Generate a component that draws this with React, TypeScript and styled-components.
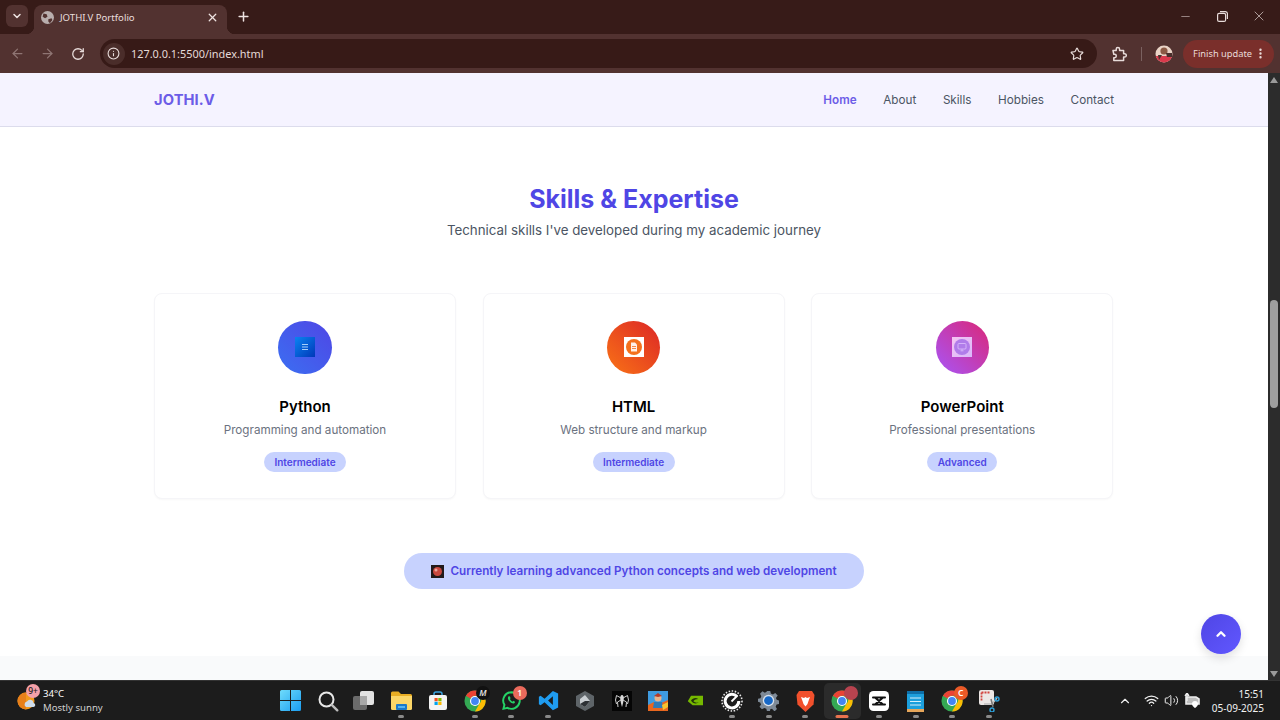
import React from 'react';
import styled, { createGlobalStyle } from 'styled-components';
import { ArrowLeft, ArrowRight, ChevronDown, ChevronUp, Info, Minus, MoreVertical, Plus, RotateCw, Star, Volume2, Wifi, X } from 'lucide-react';

const Global = createGlobalStyle`
  html, body { margin: 0; padding: 0; width: 1280px; height: 720px; overflow: hidden; background: #fff; }
  * { box-sizing: border-box; }
  body { font-family: Inter, "Liberation Sans", sans-serif; }
`;

const Screen = styled.div`
  width: 1280px; height: 720px; display: flex; flex-direction: column; overflow: hidden;
`;
const TabStrip = styled.div`
  height: 34px; flex: none; background: #371b18; display: flex; align-items: flex-end; padding-left: 6px; color: #eee3e1;
`;
const TabSearch = styled.div`
  width: 22px; height: 22px; margin: 0 6px 7px 0; background: #523230; border-radius: 6px;
  display: flex; align-items: center; justify-content: center;
`;
const Tab = styled.div`
  position: relative; width: 193px; height: 29px; background: #523230; border-radius: 8px 8px 0 0;
  display: flex; align-items: center; padding: 0 8px 4px 7px; gap: 6px;
  &::before, &::after { content: ""; position: absolute; bottom: 0; width: 8px; height: 8px; }
  &::before { left: -8px; background: radial-gradient(circle at 0 0, #371b18 8px, #523230 8.5px); }
  &::after { right: -8px; background: radial-gradient(circle at 100% 0, #371b18 8px, #523230 8.5px); }
`;
const TabTitle = styled.span`
  flex: 1; font: 400 9.6px "Noto Sans", sans-serif; color: #e9dfdd; white-space: nowrap;
`;
const NewTab = styled.div`
  margin: 0 0 10px 8px; width: 16px; height: 16px; display: flex; align-items: center; justify-content: center;
`;
const WindowControls = styled.div`
  margin-left: auto; align-self: flex-start; display: flex; padding: 8px 13px 0 0; gap: 21px; color: #e8dcda;
`;
const WinButton = styled.div`
  width: 16px; height: 16px; display: flex; align-items: center; justify-content: center;
`;

const Toolbar = styled.div`
  height: 39px; flex: none; background: #523230; display: flex; align-items: center; padding: 0 6px 0 10px; color: #e8dcda;
`;
const NavIcon = styled.div<{ $dim?: boolean; $gap?: number; $lead?: number }>`
  width: 16px; height: 16px; margin-left: ${p => p.$lead ?? 0}px; margin-right: ${p => p.$gap ?? 14}px; color: ${p => (p.$dim ? '#8f7573' : '#e8dcda')};
  display: flex; align-items: center; justify-content: center;
`;
const Omnibox = styled.div`
  width: 998px; height: 29px; border-radius: 15px; background: #371a17; display: flex; align-items: center; padding: 0 13px 0 3px;
`;
const InfoChip = styled.div`
  width: 22px; height: 22px; border-radius: 50%; background: #4a2d2a; display: flex; align-items: center; justify-content: center; margin-right: 6px;
`;
const Url = styled.span`
  flex: 1; font: 400 10.9px "Noto Sans", sans-serif; color: #e6dad8;
`;
const ToolDivider = styled.div`
  width: 1px; height: 14px; background: #7a6160; margin: 0 13px 0 14px;
`;
const Update = styled.div`
  width: 91px; height: 28px; margin-left: 10px; background: #7a2f2b; border-radius: 14px; display: flex; align-items: center; padding-left: 10px; gap: 2px;
  font: 400 9.3px "Noto Sans", sans-serif; color: #eadcda; white-space: nowrap;
`;

const Viewport = styled.div`
  flex: 1; min-height: 0; display: flex; position: relative;
`;
const Page = styled.div`
  flex: 1; min-width: 0; display: flex; flex-direction: column; background: #f9fafb;
`;
const NavBar = styled.nav`
  height: 54px; flex: none; background: #f5f3ff; border-bottom: 1px solid #dcdcec; display: flex; justify-content: center;
`;
const NavInner = styled.div`
  width: 960px; display: flex; align-items: center; justify-content: space-between;
`;
const Logo = styled.div`
  font-weight: 700; font-size: 14.7px; color: #6c5ce7; letter-spacing: 0.1px;
`;
const NavLinks = styled.div`
  display: flex; gap: 26.67px;
`;
const NavLink = styled.a<{ $active?: boolean }>`
  font-size: 11.7px; font-weight: ${p => (p.$active ? 600 : 400)}; color: ${p => (p.$active ? '#6c5ce7' : '#4b5563')};
`;
const Section = styled.section`
  height: 529px; flex: none; background: #fff; display: flex; flex-direction: column; align-items: center; padding-top: 54px;
`;
const Title = styled.h2`
  margin: 0; font-size: 25px; line-height: 36px; font-weight: 700; color: #4f46e5;
`;
const Subtitle = styled.p`
  margin: 3px 0 0; font-size: 13.33px; line-height: 20px; color: #4b5563;
`;
const Cards = styled.div`
  width: 960px; margin-top: 53px; display: grid; grid-template-columns: repeat(3, 302px); gap: 26.6px;
`;
const Card = styled.div`
  height: 206px; background: #fff; border: 1px solid #f5f5f8; border-radius: 8px; box-shadow: 0 1px 2px rgba(0,0,0,0.03);
  padding-top: 26.67px; display: flex; flex-direction: column; align-items: center;
`;
const IconCircle = styled.div<{ $from: string; $to: string }>`
  width: 53.33px; height: 53.33px; border-radius: 50%; background: linear-gradient(45deg, ${p => p.$from}, ${p => p.$to});
  display: flex; align-items: center; justify-content: center;
`;
const CardTitle = styled.h3`
  margin: 22px 0 0; font-size: 15px; line-height: 22px; font-weight: 600; color: #000;
`;
const CardText = styled.p`
  margin: 3px 0 0; font-size: 11.67px; line-height: 18px; color: #6b7280;
`;
const Level = styled.span`
  margin-top: 13px; height: 20px; padding: 0 10.4px; border-radius: 10px; background: #c7d2fe; color: #4f46e5;
  font-size: 10px; font-weight: 600; display: flex; align-items: center;
`;
const Learning = styled.div`
  margin-top: 54px; width: 460px; height: 36px; border-radius: 18px; background: #c7d2fe; display: flex; align-items: center; justify-content: center; gap: 6px;
  color: #4f46e5; font-size: 11.67px; font-weight: 600;
`;
const TopButton = styled.div`
  position: absolute; left: 1201px; top: 541px; width: 40px; height: 40px; border-radius: 50%; background: linear-gradient(135deg, #4f46e5, #6157ff);
  box-shadow: 0 4px 10px rgba(0,0,0,0.12); display: flex; align-items: center; justify-content: center; color: #fff;
`;
const Scrollbar = styled.div`
  width: 12px; flex: none; background: #2c2c2c; display: flex; flex-direction: column; align-items: center; padding-top: 4px;
`;
const Thumb = styled.div`
  width: 8px; height: 108px; margin-top: 217px; border-radius: 4px; background: #9f9f9f;
`;
const ArrowDown = styled.div`
  margin-top: auto; margin-bottom: 3px; width: 0; height: 0; border-left: 4px solid transparent; border-right: 4px solid transparent; border-top: 6px solid #9a9a9a;
`;
const ArrowUp = styled.div`
  width: 0; height: 0; border-left: 4px solid transparent; border-right: 4px solid transparent; border-bottom: 6px solid #9a9a9a;
`;

const Taskbar = styled.div`
  height: 40px; flex: none; background: #1c1c1c; border-top: 1px solid #333; display: grid; grid-template-columns: 1fr auto 1fr; align-items: center; color: #fff;
`;
const Weather = styled.div`
  display: flex; align-items: center; padding-left: 17px; gap: 6px; position: relative;
`;
const WeatherText = styled.div`
  font: 400 9.6px/14px "Noto Sans", sans-serif; color: #fff;
`;
const WeatherSub = styled.div`
  color: #cfcfcf;
`;
const Apps = styled.div`
  display: flex; justify-content: center;
`;
const AppSlot = styled.div<{ $active?: boolean }>`
  position: relative; width: 36.75px; height: 36px; display: flex; align-items: center; justify-content: center;
  border-radius: 5px; background: ${p => (p.$active ? '#2b2b2b' : 'transparent')};
`;
const RunDot = styled.span<{ $active?: boolean }>`
  position: absolute; bottom: 1px; left: 50%; transform: translateX(-50%); height: 3px; border-radius: 2px;
  width: ${p => (p.$active ? 13 : 6)}px; background: ${p => (p.$active ? '#e8734f' : '#8a8a8a')};
`;
const AppBadge = styled.span<{ $bg: string; $color?: string; $italic?: boolean }>`
  position: absolute; top: 3px; right: 3px; width: 14px; height: 14px; border-radius: 50%; background: ${p => p.$bg}; color: ${p => p.$color ?? '#fff'};
  font: ${p => (p.$italic ? 'italic' : 'normal')} 600 8.5px/14px "Noto Sans", sans-serif; text-align: center;
`;
const WeatherBadge = styled.span`
  position: absolute; left: 26px; top: -3px; width: 14px; height: 14px; border-radius: 50%; background: #f4a0a8; color: #1c1c1c;
  font: 500 8.5px/14px "Noto Sans", sans-serif; text-align: center;
`;
const Tray = styled.div`
  display: flex; align-items: center; justify-content: flex-end; padding-right: 16px; color: #f0f0f0;
`;
const TrayIcon = styled.div<{ $gap: number }>`
  display: flex; align-items: center; margin-right: ${p => p.$gap}px;
`;
const Clock = styled.div`
  font: 400 10px/14px "Noto Sans", sans-serif; text-align: right; color: #f2f2f2; margin-left: 6px;
`;

const Favicon = () => (
  <svg width="13" height="13" viewBox="0 0 16 16"><circle cx="8" cy="8" r="8" fill="#b9aead" /><path d="M3 3l4 1 1 3-3 2-3-2zM9 10l4-1 1 2-3 4-2-2z" fill="#523230" /></svg>
);
const PuzzleIcon = () => (
  <svg width="16" height="16" viewBox="0 0 16 16" fill="none" stroke="currentColor" strokeWidth="1.500" strokeLinejoin="round"><path d="M2 4.500h3.200V3.200a1.700 1.700 0 0 1 3.400 0v1.300h4v3.200h1a1.700 1.700 0 0 1 0 3.400h-1v3.400H2.800v-2.800h.8a1.700 1.700 0 0 0 0-3.400h-.8z" /></svg>
);
const Avatar = () => (
  <svg width="18" height="18" viewBox="0 0 18 18"><defs><clipPath id="av"><circle cx="9" cy="9" r="8.500" /></clipPath></defs><g clipPath="url(#av)"><rect width="18" height="18" fill="#e9d3c6" /><rect y="11" width="18" height="7" fill="#d93a4c" /><circle cx="9" cy="6" r="3.600" fill="#8b5a45" /><path d="M3 10h4l-3 5zM11 8h6v4h-5z" fill="#4a2f2c" /></g></svg>
);
const WinLogo = () => (
  <svg width="21" height="21" viewBox="0 0 21 21"><defs><linearGradient id="wl" x1="0" y1="0" x2="1" y2="1"><stop offset="0" stopColor="#6fdcfb" /><stop offset="1" stopColor="#1a9df0" /></linearGradient></defs><path fill="url(#wl)" d="M0 1.500A1.500 1.500 0 0 1 1.500 0H10v10H0zM11 0h8.500A1.500 1.500 0 0 1 21 1.500V10H11zM0 11h10v10H1.500A1.500 1.500 0 0 1 0 19.500zM11 11h10v8.500A1.500 1.500 0 0 1 19.500 21H11z" /></svg>
);
const SearchIcon = () => (
  <svg width="22" height="22" viewBox="0 0 22 22" fill="none"><circle cx="9.500" cy="9.500" r="7" stroke="#e8e8e8" strokeWidth="2" /><path d="M14.800 14.800l5.500 5.500" stroke="#bdbdbd" strokeWidth="2.400" strokeLinecap="round" /></svg>
);
const TaskView = () => (
  <svg width="22" height="20" viewBox="0 0 22 20"><rect x="0" y="5" width="14" height="14" rx="2" fill="#6b6b6b" /><rect x="7" y="0" width="14" height="14" rx="2" fill="#e2e2e2" /><rect x="7" y="5" width="7" height="9" fill="#a8a8a8" /></svg>
);
const Folder = () => (
  <svg width="21" height="19" viewBox="0 0 21 19"><path d="M0 2a1.500 1.500 0 0 1 1.500-1.500h6L10 3h9.500A1.500 1.500 0 0 1 21 4.500V6H0z" fill="#e9ae24" /><path d="M0 5h21v12.500a1.500 1.500 0 0 1-1.500 1.500h-18A1.500 1.500 0 0 1 0 17.500z" fill="#fcd768" /><rect x="5" y="13" width="11" height="6" rx="1" fill="#1c79c9" /><rect x="7" y="15" width="7" height="2" fill="#55b5f0" /></svg>
);
const Store = () => (
  <svg width="20" height="20" viewBox="0 0 20 20"><path d="M6 4V3a2 2 0 0 1 2-2h4a2 2 0 0 1 2 2v1" fill="none" stroke="#3aa3e0" strokeWidth="1.500" /><rect x="1" y="4" width="18" height="15" rx="2" fill="#f4f4f4" /><rect x="6.500" y="7" width="3.200" height="3.200" fill="#f25022" /><rect x="10.300" y="7" width="3.200" height="3.200" fill="#7fba00" /><rect x="6.500" y="10.800" width="3.200" height="3.200" fill="#00a4ef" /><rect x="10.300" y="10.800" width="3.200" height="3.200" fill="#ffb900" /></svg>
);
const Chrome = () => (
  <svg width="22" height="22" viewBox="0 0 48 48"><circle cx="24" cy="24" r="23" fill="#34a853" /><path d="M24 1a23 23 0 0 1 20 11.500H24a11.500 11.500 0 0 0-10 5.800L4.100 12.500A23 23 0 0 1 24 1z" fill="#ea4335" /><path d="M44 12.500A23 23 0 0 1 24 47l10-17.500a11.500 11.500 0 0 0 0-17z" fill="#fbbc04" /><circle cx="24" cy="24" r="11" fill="#fff" /><circle cx="24" cy="24" r="8.500" fill="#4285f4" /></svg>
);
const Whatsapp = () => (
  <svg width="21" height="21" viewBox="0 0 24 24" fill="none"><path d="M12 2.500a9.500 9.500 0 0 0-8.100 14.400L2.800 21.500l4.700-1.100A9.500 9.500 0 1 0 12 2.500z" stroke="#25d366" strokeWidth="2.200" /><path d="M8.500 7.500c-1 1 -.8 3 1.200 5.300 2 2.300 4.200 3 5.500 2.200.8-.5 1-1.300.8-1.700l-2-1-.9 1c-1-.3-2.400-1.700-2.900-2.900l.8-.9-.9-2.100c-.5-.2-1.200-.2-1.600.1z" fill="#25d366" /></svg>
);
const VSCode = () => (
  <svg width="21" height="21" viewBox="0 0 24 24"><path d="M17 1l6 3v16l-6 3L7.500 14 3 17.500 1 16.300v-8.600L3 6.500 7.500 10zM17 7l-5.500 5 5.500 5z" fill="#1f9cf0" /></svg>
);
const Hex = () => (
  <svg width="18" height="20" viewBox="0 0 18 20"><path d="M9 0l9 5v10l-9 5-9-5V5z" fill="#5e6468" /><path d="M9 4l5 6-5 6-5-3V8z" fill="#c9ced2" /><path d="M9 10l5 0-5 6-5-3z" fill="#2d3135" /></svg>
);
const Spider = () => (
  <svg width="20" height="20" viewBox="0 0 20 20"><rect width="20" height="20" fill="#050505" /><path d="M10 4c1.200 0 1.800 1.500 1.800 3S11 13 10 16c-1-3-1.800-7.500-1.800-9S8.800 4 10 4z" fill="#d8d8d8" /><path d="M9 7L4.500 4.500 3.500 9l1 4M11 7l4.500-2.500 1 4.500-1 4M9 9L5.500 11 6 16M11 9l3.500 2-.5 5" fill="none" stroke="#d0d0d0" strokeWidth="1" /></svg>
);
const Game = () => (
  <svg width="20" height="20" viewBox="0 0 20 20"><rect width="20" height="20" fill="#3f9be0" /><path d="M0 14l6-3 5 2 9-4v11H0z" fill="#e8671f" /><circle cx="10" cy="7" r="3.500" fill="#e9b48c" /><path d="M6 5l4-3 4 3-4 1z" fill="#b33a2a" /><path d="M6 11h8l1 6H5z" fill="#2e7ab8" /><path d="M14 14l6-3v5l-5 3z" fill="#f6c431" /></svg>
);
const Nvidia = () => (
  <svg width="16" height="13" viewBox="0 0 20 16"><path d="M5 2h15v12H7L1 9z" fill="#76b900" /><path d="M5 8c2-3 6-4 9-2-2 0-5 1-6 3 2 2 5 2 7 1-3 3-8 2-10-2z" fill="#24350a" /></svg>
);
const Gauge = () => (
  <svg width="22" height="22" viewBox="0 0 22 22" fill="none"><circle cx="11" cy="11" r="10" stroke="#e8e8e8" strokeWidth="1.600" strokeDasharray="1.500 1.600" /><path d="M16 6.500A6.800 6.800 0 1 0 17.800 11" stroke="#fff" strokeWidth="3" /><path d="M10.500 11.500l6-6" stroke="#fff" strokeWidth="1.800" /></svg>
);
const Gear = () => (
  <svg width="21" height="21" viewBox="0 0 24 24"><path d="M10 1h4l.7 3 2.300 1 2.700-1.500 2.800 2.800L20.500 9l.9 2.200 2.600.8v4l-2.800.7-1 2.300 1.500 2.700-2.800 2.800L16 21.500l-2 .5-.3 2h-3.500l-.7-2.500-2.300-1-2.700 1.500-2.800-2.800L3.500 16.500l-1-2.300L0 13.500V10l2.800-.7 1-2.300L2.300 4.300 5.100 1.500 7.800 3l2.200-1z" fill="#7e8a97" /><circle cx="12" cy="12" r="6.500" fill="#d8e2ee" /><circle cx="12" cy="12" r="5" fill="#1668c7" /></svg>
);
const Brave = () => (
  <svg width="19" height="22" viewBox="0 0 19 22"><path d="M3 1h13l2.500 4-1 9.500L9.500 22 1.500 14.500.5 5z" fill="#f1502c" /><path d="M5 7l3 1 1.500-1 1.500 1 3-1-1.500 4-1 3-2 2.500-2-2.500-1-3z" fill="#fff" /></svg>
);
const CapCut = () => (
  <svg width="20" height="20" viewBox="0 0 20 20" fill="none"><rect width="20" height="20" rx="4.500" fill="#fff" /><path d="M4 6.500h12M4 13.500h12M6 6.500l8 7M14 6.500l-8 7" stroke="#111" strokeWidth="2" strokeLinecap="round" /></svg>
);
const Notepad = () => (
  <svg width="17" height="22" viewBox="0 0 17 22"><rect x="0" y="1" width="17" height="21" rx="1.500" fill="#1c9fdc" /><rect x="0" y="1" width="17" height="3" fill="#0e6fa8" /><path d="M3 8h11M3 11.500h11M3 15h11" stroke="#d6f0fa" strokeWidth="1.200" /><rect x="0" y="19" width="17" height="3" fill="#e6a65a" /></svg>
);
const Snip = () => (
  <svg width="21" height="22" viewBox="0 0 21 22" fill="none"><rect x="0" y="0" width="15" height="15" rx="2" fill="#ece7e5" /><path d="M2.500 2.500h8M2.500 2.500v9" stroke="#d2453f" strokeWidth="1.800" strokeDasharray="2 1" /><path d="M5 14l8 0 5-6" stroke="#bdbdbd" strokeWidth="1.500" /><path d="M12 9l2 8" stroke="#7a7a7a" strokeWidth="1.500" /><circle cx="18" cy="9" r="2" stroke="#2d9fd8" strokeWidth="1.400" /><circle cx="13" cy="20" r="2" stroke="#2d9fd8" strokeWidth="1.400" /></svg>
);
const NetBadge = () => (
  <svg width="18" height="16" viewBox="0 0 18 16"><path d="M3 4h10l3 2v5H3z" fill="#bdbdbd" stroke="#eee" strokeWidth="1.600" /><path d="M4 0v8M2 3l2-3 2 3" fill="none" stroke="#eee" strokeWidth="1.400" /><path d="M9 11a3 3 0 0 1 6 0c0 2-3 4-3 4s-3-2-3-4z" fill="#fff" /></svg>
);
const PyGlyph = () => (
  <svg width="20" height="20" viewBox="0 0 20 20"><defs><linearGradient id="pg" x1="0" y1="0" x2="1" y2="1"><stop offset="0" stopColor="#0a84f2" /><stop offset="1" stopColor="#0038b8" /></linearGradient></defs><rect width="20" height="20" fill="url(#pg)" /><path d="M7 7.500h6M7 10h6M7 12.500h6" stroke="#b8dcff" strokeWidth="0.900" /></svg>
);
const HtmlGlyph = () => (
  <svg width="20" height="20" viewBox="0 0 20 20"><rect width="20" height="20" fill="#fff" /><circle cx="10" cy="10" r="8" fill="#f4711e" /><path d="M7 5.500h4l2 2v7H7z" fill="#fff" opacity="0.900" /><path d="M8 9.500h4M8 11.500h4" stroke="#f4711e" strokeWidth="0.800" /></svg>
);
const PptGlyph = () => (
  <svg width="20" height="20" viewBox="0 0 20 20" fill="none"><defs><linearGradient id="ppg" x1="0" y1="0" x2="1" y2="1"><stop offset="0" stopColor="#f5c6f2" /><stop offset="1" stopColor="#d9b8fb" /></linearGradient></defs><rect width="20" height="20" fill="url(#ppg)" /><circle cx="10" cy="10" r="8" fill="#b07cea" /><rect x="6" y="6.500" width="8" height="5.500" rx="1" stroke="#d9b8fb" strokeWidth="0.900" /><path d="M10 12v1.500M8.500 13.800h3" stroke="#d9b8fb" strokeWidth="0.900" /></svg>
);
const Moon = () => (
  <svg width="13" height="13" viewBox="0 0 13 13"><rect width="13" height="13" fill="#221a1a" /><circle cx="6.500" cy="6.500" r="4.500" fill="#c9483f" /><circle cx="5" cy="5" r="1.500" fill="#f0a59c" /></svg>
);
const WeatherIcon = () => (
  <svg width="20" height="20" viewBox="0 0 20 20"><circle cx="9" cy="10" r="8.500" fill="#f39a1c" /><path d="M9 1.500a8.500 8.500 0 0 0 0 17z" fill="#e8801a" /><path d="M9 16a3 3 0 0 1 1-5.500A3.500 3.500 0 0 1 16.500 12 2 2 0 0 1 16 16z" fill="#cfdcea" /></svg>
);

const apps: { icon: React.ReactNode; run?: boolean; active?: boolean; badge?: React.ReactNode }[] = [
  { icon: <WinLogo /> },
  { icon: <SearchIcon /> },
  { icon: <TaskView /> },
  { icon: <Folder />, run: true },
  { icon: <Store /> },
  { icon: <Chrome />, run: true, badge: <AppBadge $bg="#111" $color="#ddd" $italic>M</AppBadge> },
  { icon: <Whatsapp />, run: true, badge: <AppBadge $bg="#ea6a5c">1</AppBadge> },
  { icon: <VSCode />, run: true },
  { icon: <Hex /> },
  { icon: <Spider /> },
  { icon: <Game /> },
  { icon: <Nvidia /> },
  { icon: <Gauge />, run: true },
  { icon: <Gear />, run: true },
  { icon: <Brave />, run: true },
  { icon: <Chrome />, run: true, active: true, badge: <AppBadge $bg="#b8434f" /> },
  { icon: <CapCut />, run: true },
  { icon: <Notepad />, run: true },
  { icon: <Chrome />, run: true, badge: <AppBadge $bg="#ea5a28">C</AppBadge> },
  { icon: <Snip />, run: true },
];

const skills = [
  { name: 'Python', text: 'Programming and automation', level: 'Intermediate', from: '#3b6ff2', to: '#4f46e5', glyph: <PyGlyph /> },
  { name: 'HTML', text: 'Web structure and markup', level: 'Intermediate', from: '#f97316', to: '#dc2626', glyph: <HtmlGlyph /> },
  { name: 'PowerPoint', text: 'Professional presentations', level: 'Advanced', from: '#a855f7', to: '#db2777', glyph: <PptGlyph /> },
];

export default function App() {
  return (
    <Screen>
      <Global />
      <TabStrip>
        <TabSearch><ChevronDown size={12} strokeWidth={3} /></TabSearch>
        <Tab>
          <Favicon />
          <TabTitle>JOTHI.V Portfolio</TabTitle>
          <X size={13} strokeWidth={2.4} />
        </Tab>
        <NewTab><Plus size={15} strokeWidth={2.4} /></NewTab>
        <WindowControls>
          <WinButton><Minus size={13} strokeWidth={1} /></WinButton>
          <WinButton>
            <svg width="11" height="11" viewBox="0 0 11 11" fill="none" stroke="currentColor" strokeWidth="1.200"><rect x="0.600" y="2.400" width="8" height="8" rx="1.500" /><path d="M3 .6h5.500A2 2 0 0 1 10.400 2.600V8" /></svg>
          </WinButton>
          <WinButton><X size={16} strokeWidth={1} /></WinButton>
        </WindowControls>
      </TabStrip>
      <Toolbar>
        <NavIcon $dim><ArrowLeft size={15} /></NavIcon>
        <NavIcon $dim><ArrowRight size={15} /></NavIcon>
        <NavIcon><RotateCw size={14} strokeWidth={2.2} /></NavIcon>
        <Omnibox>
          <InfoChip><Info size={13} strokeWidth={2} /></InfoChip>
          <Url>127.0.0.1:5500/index.html</Url>
          <Star size={14} strokeWidth={2} />
        </Omnibox>
        <NavIcon $gap={0} $lead={14}><PuzzleIcon /></NavIcon>
        <ToolDivider />
        <Avatar />
        <Update>
          Finish update
          <MoreVertical size={13} strokeWidth={2.4} />
        </Update>
      </Toolbar>
      <Viewport>
        <Page>
          <NavBar>
            <NavInner>
              <Logo>JOTHI.V</Logo>
              <NavLinks>
                <NavLink $active>Home</NavLink>
                <NavLink>About</NavLink>
                <NavLink>Skills</NavLink>
                <NavLink>Hobbies</NavLink>
                <NavLink>Contact</NavLink>
              </NavLinks>
            </NavInner>
          </NavBar>
          <Section>
            <Title>Skills &amp; Expertise</Title>
            <Subtitle>Technical skills I've developed during my academic journey</Subtitle>
            <Cards>
              {skills.map(s => (
                <Card key={s.name}>
                  <IconCircle $from={s.from} $to={s.to}>{s.glyph}</IconCircle>
                  <CardTitle>{s.name}</CardTitle>
                  <CardText>{s.text}</CardText>
                  <Level>{s.level}</Level>
                </Card>
              ))}
            </Cards>
            <Learning><Moon /> Currently learning advanced Python concepts and web development</Learning>
          </Section>
        </Page>
        <Scrollbar>
          <ArrowUp />
          <Thumb />
          <ArrowDown />
        </Scrollbar>
        <TopButton><ChevronUp size={14} strokeWidth={4} /></TopButton>
      </Viewport>
      <Taskbar>
        <Weather>
          <WeatherIcon />
          <WeatherBadge>9+</WeatherBadge>
          <WeatherText>34°C<WeatherSub>Mostly sunny</WeatherSub></WeatherText>
        </Weather>
        <Apps>
          {apps.map((a, i) => (
            <AppSlot key={i} $active={a.active}>
              {a.icon}
              {a.badge}
              {a.run && <RunDot $active={a.active} />}
            </AppSlot>
          ))}
        </Apps>
        <Tray>
          <TrayIcon $gap={12}><ChevronUp size={14} strokeWidth={2} /></TrayIcon>
          <TrayIcon $gap={5}><Wifi size={15} strokeWidth={2} /></TrayIcon>
          <TrayIcon $gap={4}><Volume2 size={15} strokeWidth={1.600} /></TrayIcon>
          <TrayIcon $gap={5}><NetBadge /></TrayIcon>
          <Clock>15:51<br />05-09-2025</Clock>
        </Tray>
      </Taskbar>
    </Screen>
  );
}
